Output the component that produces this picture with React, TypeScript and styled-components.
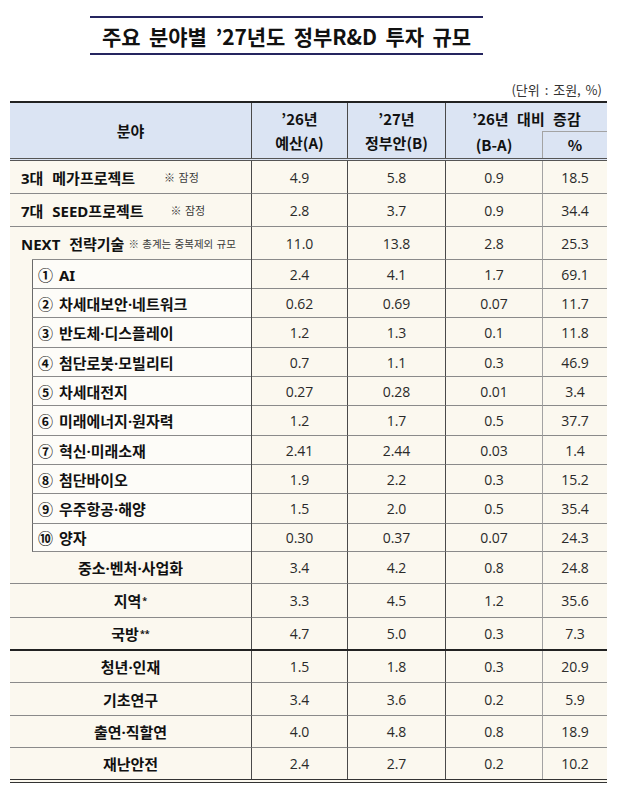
import React from 'react';
import styled, { createGlobalStyle, css } from 'styled-components';

type Kind = 'main' | 'group' | 'sub' | 'center';
type Rule = 'thin' | 'thick' | 'double';

interface RowData {
  label: string;
  kind: Kind;
  note?: string;
  noteGap?: number;
  noteSize?: number;
  sup?: string;
  vals: [string, string, string, string];
  h: number;
  rule?: Rule;
}

const rows: RowData[] = [
  { label: '3대 메가프로젝트', kind: 'main', note: '※ 잠정', noteGap: 29, vals: ['4.9', '5.8', '0.9', '18.5'], h: 33 },
  { label: '7대 SEED프로젝트', kind: 'main', note: '※ 잠정', noteGap: 27, vals: ['2.8', '3.7', '0.9', '34.4'], h: 33 },
  { label: 'NEXT 전략기술', kind: 'group', note: '※ 총계는 중복제외 규모', noteGap: 4, noteSize: 10.5, vals: ['11.0', '13.8', '2.8', '25.3'], h: 33 },
  { label: '① AI', kind: 'sub', vals: ['2.4', '4.1', '1.7', '69.1'], h: 29 },
  { label: '② 차세대보안·네트워크', kind: 'sub', vals: ['0.62', '0.69', '0.07', '11.7'], h: 29 },
  { label: '③ 반도체·디스플레이', kind: 'sub', vals: ['1.2', '1.3', '0.1', '11.8'], h: 30 },
  { label: '④ 첨단로봇·모빌리티', kind: 'sub', vals: ['0.7', '1.1', '0.3', '46.9'], h: 29 },
  { label: '⑤ 차세대전지', kind: 'sub', vals: ['0.27', '0.28', '0.01', '3.4'], h: 29 },
  { label: '⑥ 미래에너지·원자력', kind: 'sub', vals: ['1.2', '1.7', '0.5', '37.7'], h: 30 },
  { label: '⑦ 혁신·미래소재', kind: 'sub', vals: ['2.41', '2.44', '0.03', '1.4'], h: 29 },
  { label: '⑧ 첨단바이오', kind: 'sub', vals: ['1.9', '2.2', '0.3', '15.2'], h: 29 },
  { label: '⑨ 우주항공·해양', kind: 'sub', vals: ['1.5', '2.0', '0.5', '35.4'], h: 30 },
  { label: '⑩ 양자', kind: 'sub', vals: ['0.30', '0.37', '0.07', '24.3'], h: 28 },
  { label: '중소·벤처·사업화', kind: 'center', vals: ['3.4', '4.2', '0.8', '24.8'], h: 32 },
  { label: '지역', sup: '*', kind: 'center', vals: ['3.3', '4.5', '1.2', '35.6'], h: 34 },
  { label: '국방', sup: '**', kind: 'center', vals: ['4.7', '5.0', '0.3', '7.3'], h: 33, rule: 'thick' },
  { label: '청년·인재', kind: 'center', vals: ['1.5', '1.8', '0.3', '20.9'], h: 32 },
  { label: '기초연구', kind: 'center', vals: ['3.4', '3.6', '0.2', '5.9'], h: 33 },
  { label: '출연·직할연', kind: 'center', vals: ['4.0', '4.8', '0.8', '18.9'], h: 32 },
  { label: '재난안전', kind: 'center', vals: ['2.4', '2.7', '0.2', '10.2'], h: 35, rule: 'double' },
];

const COLS = '242px 96px 98px 97px 64px';
const H_LINE = '#8a8a8a';
const V_DARK = '#4a4a4a';
const V_LIGHT = '#a3a3a3';
const CREAM = '#fbf8ef';
const HEAD_BG = '#dbe4f3';
const LABEL_FONT = '"Noto Sans", "Noto Sans CJK KR", sans-serif';

const GlobalStyle = createGlobalStyle`
  html, body { margin: 0; padding: 0; background: #ffffff; }
  body { font-family: "Noto Sans CJK KR", "Noto Sans", sans-serif; color: #111; }
`;

const Page = styled.div`
  width: 640px;
  height: 788px;
  box-sizing: border-box;
  padding-top: 16px;
  overflow: hidden;
  background: #fff;
`;

const Title = styled.h1`
  margin: 0 0 0 90px;
  width: 393px;
  height: 39px;
  box-sizing: border-box;
  border-top: 2px solid #25255f;
  border-bottom: 2px solid #25255f;
  display: flex;
  align-items: center;
  justify-content: center;
  font-size: 21px;
  font-weight: 700;
  color: #111;
  word-spacing: 4px;
  letter-spacing: -0.1px;
`;

const Unit = styled.div`
  margin: 27px 38px 0 0;
  height: 16px;
  text-align: right;
  font-size: 13px;
  line-height: 16px;
  color: #333;
  word-spacing: 2px;
`;

const Table = styled.div`
  margin: 3px 0 0 10px;
  width: 597px;
`;

const Head = styled.div`
  display: grid;
  grid-template-columns: ${COLS};
  grid-template-rows: 28px 27px;
  border-top: 2px solid #222;
  border-bottom: 3px double #555;
  background: ${HEAD_BG};
  font-weight: 700;
  font-size: 15px;
  color: #111;
`;

const HeadCell = styled.div<{ $col: string; $row: string; $line?: 'dark' | 'light' | 'none'; $top?: boolean; $align?: 'center' | 'end' | 'start' }>`
  grid-column: ${p => p.$col};
  grid-row: ${p => p.$row};
  display: flex;
  flex-direction: column;
  align-items: center;
  justify-content: ${p => p.$align ?? 'center'};
  line-height: 24px;
  box-sizing: border-box;
  word-spacing: 5px;
  border-right: ${p => (p.$line === 'none' ? 'none' : `1px solid ${p.$line === 'light' ? V_LIGHT : V_DARK}`)};
  ${p => p.$top && css`border-top: 1px solid ${V_LIGHT};`}
`;

const Row = styled.div<{ $h: number; $rule: Rule }>`
  display: grid;
  grid-template-columns: ${COLS};
  height: ${p => p.$h}px;
  box-sizing: border-box;
  background: ${CREAM};
  ${p => p.$rule === 'thick' && css`border-bottom: 2px solid #222;`}
  ${p => p.$rule === 'double' && css`border-bottom: 4px double #333;`}
`;

const ruleLine = (r: Rule) => (r === 'thin' ? `1px solid ${H_LINE}` : 'none');

const LabelCell = styled.div<{ $kind: Kind; $rule: Rule }>`
  display: flex;
  align-items: center;
  box-sizing: border-box;
  border-right: 1px solid ${V_DARK};
  font-family: ${LABEL_FONT};
  font-weight: 700;
  font-size: 15px;
  word-spacing: 2px;
  color: #111;
  white-space: nowrap;
  ${p => p.$kind === 'main' && css`
    padding-left: 11px;
    word-spacing: 5px;
    border-bottom: ${ruleLine(p.$rule)};
  `}
  ${p => p.$kind === 'group' && css`
    padding-left: 11px;
    word-spacing: 5px;
    background: linear-gradient(${H_LINE}, ${H_LINE}) no-repeat right bottom / calc(100% - 22px) 1px;
  `}
  ${p => p.$kind === 'center' && css`
    justify-content: center;
    border-bottom: ${ruleLine(p.$rule)};
  `}
  ${p => p.$kind === 'sub' && css`
    padding-left: 22px;
    align-items: stretch;
  `}
`;

const SubBox = styled.div`
  flex: 1;
  display: flex;
  align-items: center;
  padding-left: 5px;
  border-left: 1px solid #6a6a6a;
  border-bottom: 1px solid ${H_LINE};
  background: #fdfcf8;
`;

const Note = styled.span<{ $gap: number; $size: number }>`
  margin-left: ${p => p.$gap}px;
  font-family: "Noto Sans CJK KR", sans-serif;
  font-size: ${p => p.$size}px;
  font-weight: 400;
  word-spacing: 1px;
  color: #3a3a3a;
`;

const Sup = styled.sup`
  font-size: 9px;
  line-height: 0;
  vertical-align: 6px;
  margin-left: 1px;
`;

const NumCell = styled.div<{ $rule: Rule; $line: 'dark' | 'light' | 'none' }>`
  display: flex;
  align-items: center;
  justify-content: center;
  box-sizing: border-box;
  font-family: "Open Sans", "Noto Sans", sans-serif;
  font-size: 14px;
  color: #2a2a2a;
  border-bottom: ${p => ruleLine(p.$rule)};
  border-right: ${p => (p.$line === 'none' ? 'none' : `1px solid ${p.$line === 'light' ? V_LIGHT : V_DARK}`)};
`;

const lines: ('dark' | 'light' | 'none')[] = ['dark', 'dark', 'light', 'none'];

export default function App() {
  return (
    <>
      <GlobalStyle />
      <Page>
        <Title>주요 분야별 ’27년도 정부R&amp;D 투자 규모</Title>
        <Unit>(단위 : 조원, %)</Unit>
        <Table>
          <Head>
            <HeadCell $col="1" $row="1 / 3">분야</HeadCell>
            <HeadCell $col="2" $row="1 / 3">
              <span>’26년</span>
              <span>예산(A)</span>
            </HeadCell>
            <HeadCell $col="3" $row="1 / 3">
              <span>’27년</span>
              <span>정부안(B)</span>
            </HeadCell>
            <HeadCell $col="4 / 6" $row="1" $line="none" $align="end">’26년 대비 증감</HeadCell>
            <HeadCell $col="4" $row="2" $line="light">(B-A)</HeadCell>
            <HeadCell $col="5" $row="2" $line="none" $top>%</HeadCell>
          </Head>
          {rows.map((r, i) => {
            const rule: Rule = r.rule ?? 'thin';
            const note = r.note ? (
              <Note $gap={r.noteGap ?? 20} $size={r.noteSize ?? 11}>{r.note}</Note>
            ) : null;
            return (
              <Row key={i} $h={r.h} $rule={rule}>
                <LabelCell $kind={r.kind} $rule={rule}>
                  {r.kind === 'sub' ? (
                    <SubBox>{r.label}</SubBox>
                  ) : (
                    <>
                      {r.label}
                      {r.sup && <Sup>{r.sup}</Sup>}
                      {note}
                    </>
                  )}
                </LabelCell>
                {r.vals.map((v, j) => (
                  <NumCell key={j} $rule={rule} $line={lines[j]}>{v}</NumCell>
                ))}
              </Row>
            );
          })}
        </Table>
      </Page>
    </>
  );
}
